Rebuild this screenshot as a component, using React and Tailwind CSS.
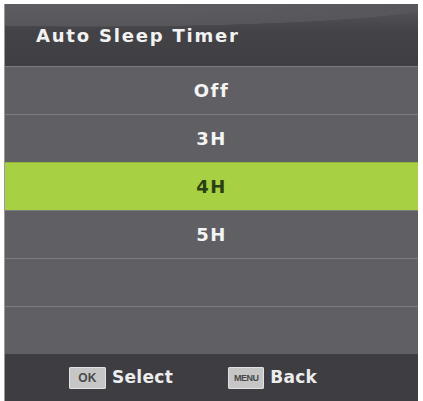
const rows = [
  { label: "Off" },
  { label: "3H" },
  { label: "4H", active: true },
  { label: "5H" },
  { label: "" },
  { label: "" },
];

function Key({ children, wide }) {
  return (
    <span
      className={`flex h-[22px] items-center justify-center rounded-[2px] bg-[#c6c6c6] font-['Liberation_Sans',Arial,sans-serif] font-bold leading-none text-[#4a4a4a] shadow-[inset_0_0_0_1px_#e2e2e2] ${
        wide ? "w-[36px] text-[9px] tracking-[-0.5px]" : "w-[37px] text-[12px]"
      }`}
    >
      {children}
    </span>
  );
}

export default function App() {
  return (
    <div className="h-[401px] w-[423px] overflow-hidden bg-white pl-[4px] pr-[5px] pt-[4px] font-['DejaVu_Sans',Verdana,sans-serif]">
      <div className="flex h-full flex-col border-l border-[#9a9a9e] bg-[#5f5f63]">
        <div className="flex h-[62px] items-center bg-[radial-gradient(140%_60%_at_20%_0%,#5e5e62_0%,#57575b_60%,transparent_61%),linear-gradient(180deg,#58585c_0%,#434347_45%,#3f3f43_100%)] pl-[31px] text-[18px] font-bold tracking-[1.8px] text-[#f2f2f2]">
          Auto Sleep Timer
        </div>
        {rows.map((r, i) => (
          <div
            key={i}
            className={`flex h-[48px] items-center justify-center border-t text-[18px] font-bold tracking-[1.5px] ${
              r.active
                ? "border-[#8fb83a] bg-[#a7d142] text-[#2b3f12]"
                : "border-[#7b7b80] bg-[#606064] text-[#f4f4f4]"
            }`}
          >
            {r.label}
          </div>
        ))}
        <div className="flex flex-1 items-center bg-[#3d3d42] pl-[64px] pt-[1px] text-[17px] font-bold tracking-[0.3px] text-[#ededed]">
          <Key>OK</Key>
          <span className="ml-[6px]">Select</span>
          <span className="ml-[55px]">
            <Key wide>MENU</Key>
          </span>
          <span className="ml-[6px]">Back</span>
        </div>
      </div>
    </div>
  );
}
